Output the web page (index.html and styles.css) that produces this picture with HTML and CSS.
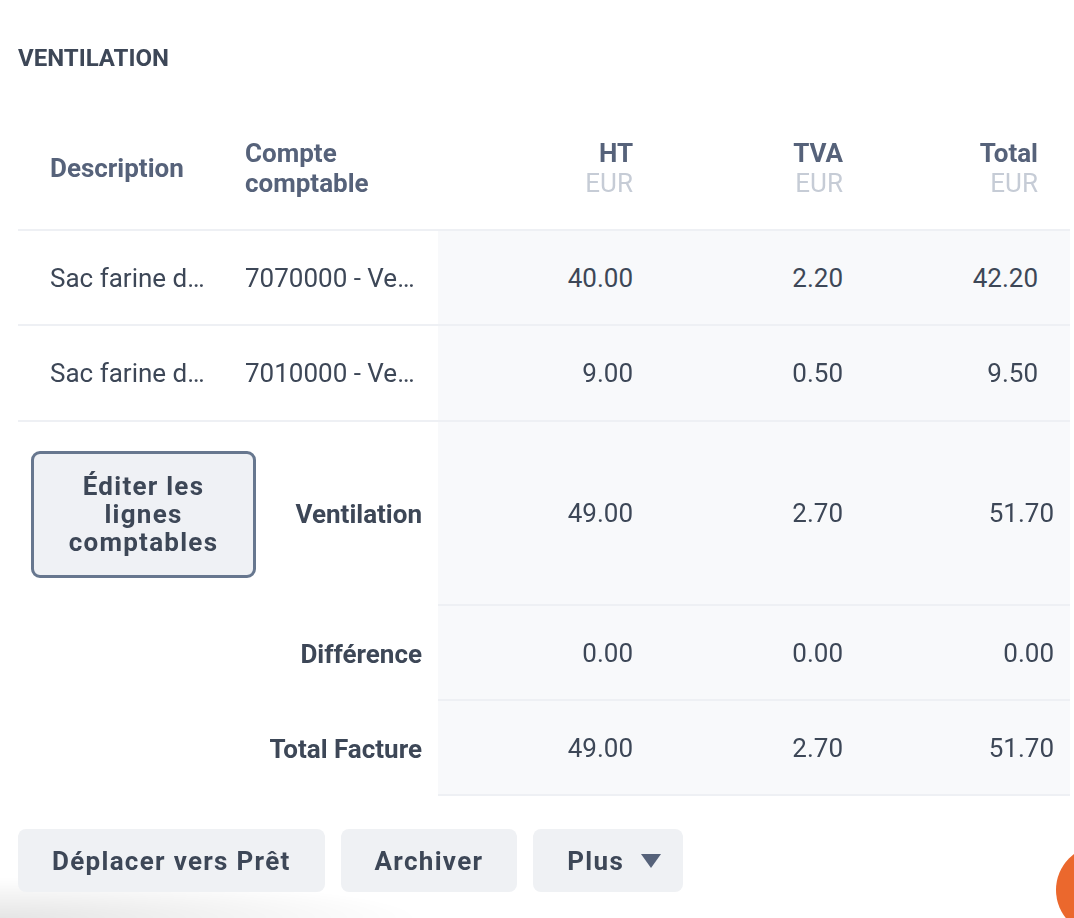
FILE: index.html
```html
<!DOCTYPE html>
<html lang="fr">
<head>
<meta charset="utf-8">
<title>Ventilation</title>
<link rel="stylesheet" href="styles.css">
</head>
<body>
<div class="shadow"></div>
<main class="page">
  <h2 class="title">VENTILATION</h2>
  <div class="vtable">
    <div class="row head">
      <div class="cell c-desc">Description</div>
      <div class="cell c-acc">Compte<br>comptable</div>
      <div class="cell num"><span>HT</span><span class="cur">EUR</span></div>
      <div class="cell num"><span>TVA</span><span class="cur">EUR</span></div>
      <div class="cell num"><span>Total</span><span class="cur">EUR</span></div>
    </div>
    <div class="row line">
      <div class="cell c-desc"><span class="trunc">Sac farine de blé T55</span></div>
      <div class="cell c-acc"><span class="trunc">7070000 - Ventes de marchandises</span></div>
      <div class="cell num val">40.00</div>
      <div class="cell num val">2.20</div>
      <div class="cell num val">42.20</div>
    </div>
    <div class="row line line-2">
      <div class="cell c-desc"><span class="trunc">Sac farine de seigle</span></div>
      <div class="cell c-acc"><span class="trunc">7010000 - Ventes de produits finis</span></div>
      <div class="cell num val">9.00</div>
      <div class="cell num val">0.50</div>
      <div class="cell num val">9.50</div>
    </div>
    <div class="row sum sum-first">
      <div class="cell sum-label">
        <button class="edit-btn" type="button">Éditer les lignes comptables</button>
        <span class="label">Ventilation</span>
      </div>
      <div class="cell num val">49.00</div>
      <div class="cell num val">2.70</div>
      <div class="cell num val last">51.70</div>
    </div>
    <div class="row sum">
      <div class="cell sum-label"><span class="label">Différence</span></div>
      <div class="cell num val">0.00</div>
      <div class="cell num val">0.00</div>
      <div class="cell num val last">0.00</div>
    </div>
    <div class="row sum">
      <div class="cell sum-label"><span class="label">Total Facture</span></div>
      <div class="cell num val">49.00</div>
      <div class="cell num val">2.70</div>
      <div class="cell num val last">51.70</div>
    </div>
  </div>
  <div class="actions">
    <button class="act" type="button">Déplacer vers Prêt</button>
    <button class="act" type="button">Archiver</button>
    <button class="act act-more" type="button">Plus <span class="caret"></span></button>
  </div>
</main>
<div class="fab"></div>
</body>
</html>
```
FILE: styles.css
```css
html, body {
  margin: 0;
  padding: 0;
  background: #ffffff;
  overflow: hidden;
  height: 100%;
}
body {
  font-family: Roboto, "Liberation Sans", Arial, sans-serif;
  color: #3d4757;
}
.page {
  position: relative;
  z-index: 1;
  padding: 44px 4px 0 18px;
}
.title {
  margin: 0;
  font-size: 24px;
  line-height: 28px;
  font-weight: 700;
  color: #3d4757;
  letter-spacing: 0;
}
.vtable {
  margin-top: 34px;
  width: 1052px;
}
.row {
  display: grid;
  grid-template-columns: 211px 209px 227px 210px 195px;
}
.cell {
  display: flex;
  align-items: center;
  box-sizing: border-box;
  font-size: 26px;
  line-height: 30px;
  min-width: 0;
}
.head {
  height: 125px;
}
.head .cell {
  border-bottom: 2px solid #eef0f4;
  font-weight: 700;
  color: #56627a;
}
.c-desc {
  padding: 0 16px 0 32px;
}
.c-acc {
  padding: 0 16px 0 16px;
}
.num {
  justify-content: flex-end;
  padding-right: 32px;
  text-align: right;
}
.head .num {
  flex-direction: column;
  align-items: flex-end;
  justify-content: center;
}
.cur {
  color: #c6ccd6;
  font-weight: 400;
}
.line {
  height: 95px;
}
.line-2 {
  height: 96px;
}
.line .cell {
  border-bottom: 2px solid #eef0f4;
}
.line .num, .sum .num {
  background: #f8f9fb;
}
.trunc {
  display: block;
  white-space: nowrap;
  overflow: hidden;
  text-overflow: ellipsis;
  min-width: 0;
}
.val {
  color: #3d4757;
}
.sum {
  height: 95px;
}
.sum-first {
  height: 184px;
}
.sum .num {
  border-bottom: 2px solid #eef0f4;
}
.sum .num.last {
  padding-right: 16px;
}
.sum-label {
  grid-column: span 2;
  display: flex;
  align-items: center;
  justify-content: flex-end;
  padding: 0 16px 0 13px;
}
.sum-first .sum-label {
  justify-content: space-between;
}
.label {
  font-weight: 700;
  color: #3d4757;
}
.edit-btn {
  width: 225px;
  height: 127px;
  box-sizing: border-box;
  border: 3px solid #67778f;
  border-radius: 9px;
  background: #eff1f5;
  font-family: inherit;
  font-size: 26px;
  line-height: 28px;
  font-weight: 700;
  letter-spacing: 1.25px;
  color: #3d4757;
  padding: 0 14px;
  text-align: center;
}
.actions {
  display: flex;
  gap: 16px;
  margin-top: 33px;
}
.act {
  height: 63px;
  border: 0;
  border-radius: 8px;
  background: #eff1f4;
  font-family: inherit;
  font-size: 26px;
  font-weight: 700;
  letter-spacing: 1.3px;
  color: #3d4757;
  padding: 0 34px;
  display: flex;
  align-items: center;
  gap: 17px;
}
.act-more {
  padding-right: 22px;
}
.caret {
  width: 0;
  height: 0;
  border-left: 10px solid transparent;
  border-right: 10px solid transparent;
  border-top: 14px solid #56627a;
}
.shadow {
  position: fixed;
  left: 0;
  bottom: 0;
  width: 560px;
  height: 60px;
  z-index: 0;
  background: radial-gradient(ellipse 100% 90% at 0% 100%, rgba(0, 0, 0, 0.1), rgba(0, 0, 0, 0) 75%);
}
.fab {
  position: fixed;
  right: -72px;
  bottom: -17px;
  width: 90px;
  height: 90px;
  border-radius: 50%;
  background: #eb682d;
  z-index: 2;
}
```
